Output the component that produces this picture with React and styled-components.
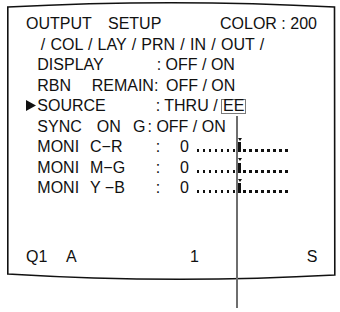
import React from 'react'
import styled, { createGlobalStyle } from 'styled-components'

const Global = createGlobalStyle`
  html, body {
    margin: 0;
    padding: 0;
    background: #fff;
  }
  body {
    font-family: 'Liberation Sans', Arial, sans-serif;
    color: #111;
  }
`

const Page = styled.div`
  position: relative;
  width: 340px;
  height: 312px;
  overflow: hidden;
`

const Frame = styled.svg`
  position: absolute;
  left: 0;
  top: 0;
  width: 340px;
  height: 312px;
  pointer-events: none;
`

const Screen = styled.div`
  position: relative;
  margin: 7px 0 0 8px;
  width: 327px;
  height: 268px;
  box-sizing: border-box;
  padding: 7.2px 0 7.3px 18px;
  display: flex;
  flex-direction: column;
  font-size: 16px;
`

const Row = styled.div`
  display: flex;
  align-items: baseline;
  height: 20.5px;
  line-height: 20.5px;
  white-space: pre;
  padding-left: ${p => p.$indent || 0}px;
`

const Footer = styled(Row)`
  margin-top: auto;
`

const Cell = styled.span`
  flex: none;
  width: ${p => (p.$w ? `${p.$w}px` : 'auto')};
`

const Path = styled.span`
  word-spacing: 0.8px;
`

const Boxed = styled.span`
  display: inline-block;
  line-height: 12.4px;
  padding: 0 1px;
  margin-left: -1px;
  border: 1.3px solid #7a7a7a;
`

const Pointer = styled.svg`
  flex: none;
  width: 10px;
  height: 11px;
  margin-right: 1.3px;
`

const Scale = styled.span`
  display: inline-flex;
  align-items: flex-end;
  height: 14px;
`

const Dots = styled.span`
  display: inline-flex;
  gap: 3.2px;
`

const Dot = styled.i`
  display: block;
  width: 2.8px;
  height: 3px;
  background: #111;
`

const Marker = styled.span`
  position: relative;
  display: block;
  width: 3px;
  height: 10px;
  margin: 0 1.5px 0 3px;
  background: #111;
  &::before {
    content: '';
    position: absolute;
    left: -0.5px;
    top: -4.5px;
    border-left: 2px solid transparent;
    border-right: 2px solid transparent;
    border-top: 3px solid #111;
  }
`

const Callout = styled.div`
  position: absolute;
  left: 236px;
  top: 116px;
  width: 2px;
  height: 192px;
  background: #6e6e6e;
`

const DotRun = ({ n }) => (
  <Dots>
    {Array.from({ length: n }, (_, i) => <Dot key={i} />)}
  </Dots>
)

const Moni = ({ label }) => (
  <Row $indent={11.3}>
    <Cell $w={52.7}>MONI</Cell>
    <Cell $w={65.7}>{label}</Cell>
    <Cell $w={24.3}>:</Cell>
    <Cell $w={16.7}>0</Cell>
    <Scale>
      <DotRun n={7} />
      <Marker />
      <DotRun n={8} />
    </Scale>
  </Row>
)

export default function App() {
  return (
    <Page>
      <Global />
      <Frame viewBox="0 0 340 312">
        <path
          d="M7.8 7 Q171 -1.6 334.5 7 L334.8 275 Q171 284 7.8 274 Z"
          fill="none"
          stroke="#111"
          strokeWidth="1.6"
        />
      </Frame>
      <Screen>
        <Row>
          <Cell $w={82}>OUTPUT</Cell>
          <Cell $w={112}>SETUP</Cell>
          <Cell>COLOR : 200</Cell>
        </Row>
        <Row $indent={14.7}>
          <Path>/ COL / LAY / PRN / IN / OUT /</Path>
        </Row>
        <Row $indent={11.3}>
          <Cell $w={119.4}>DISPLAY</Cell>
          <Cell>: OFF / ON</Cell>
        </Row>
        <Row $indent={11.3}>
          <Cell $w={54.4}>RBN</Cell>
          <Cell $w={74.3}>REMAIN:</Cell>
          <Cell>OFF / ON</Cell>
        </Row>
        <Row>
          <Pointer viewBox="0 0 10 11">
            <path d="M0 0 L10 5.5 L0 11 Z" fill="#111" />
          </Pointer>
          <Cell $w={118.4}>SOURCE</Cell>
          <Cell>: THRU / </Cell>
          <Boxed>EE</Boxed>
        </Row>
        <Row $indent={11.3}>
          <Cell $w={59.4}>SYNC</Cell>
          <Cell $w={36.3}>ON</Cell>
          <Cell $w={14.5}>G</Cell>
          <Cell>: OFF / ON</Cell>
        </Row>
        <Moni label="C−R" />
        <Moni label="M−G" />
        <Moni label="Y −B" />
        <Footer>
          <Cell $w={40}>Q1</Cell>
          <Cell $w={124}>A</Cell>
          <Cell $w={116.7}>1</Cell>
          <Cell>S</Cell>
        </Footer>
      </Screen>
      <Callout />
    </Page>
  )
}
